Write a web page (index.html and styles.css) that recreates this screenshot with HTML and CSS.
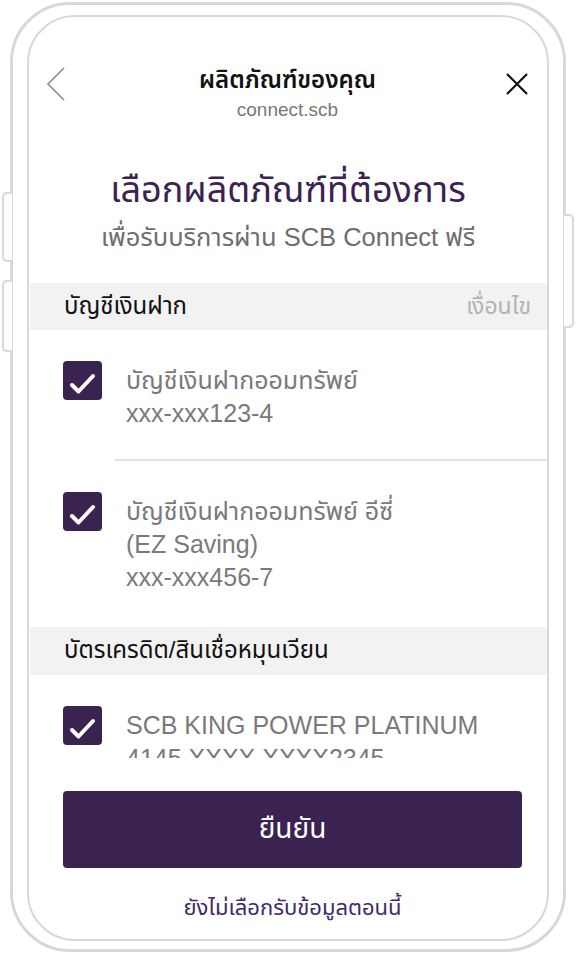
FILE: index.html
```html
<html>
	<head>
		<meta charset="utf-8">
		<link rel="stylesheet" href="styles.css">
	</head>
	<body>
		<div class="device">
			<span class="side-key key-left-top"></span>
			<span class="side-key key-left-bottom"></span>
			<span class="side-key key-right"></span>

			<div class="screen">
				<div class="nav">
					<a class="nav-back" href="#">
						<svg width="20" height="34" viewBox="0 0 20 34"><path d="M18 1 L2 17 L18 33" fill="none" stroke="#8a8a8a" stroke-width="1.6"/></svg>
					</a>
					<div class="nav-title">
						<h1>ผลิตภัณฑ์ของคุณ</h1>
						<p>connect.scb</p>
					</div>
					<a class="nav-close" href="#">
						<svg width="24" height="24" viewBox="0 0 24 24"><path d="M2 2 L22 22 M22 2 L2 22" fill="none" stroke="#111" stroke-width="2.2"/></svg>
					</a>
				</div>

				<div class="intro">
					<h2>เลือกผลิตภัณฑ์ที่ต้องการ</h2>
					<p>เพื่อรับบริการผ่าน SCB Connect ฟรี</p>
				</div>

				<div class="product-list">
					<div class="group-head">
						<span>บัญชีเงินฝาก</span>
						<a href="#">เงื่อนไข</a>
					</div>

					<label class="product">
						<span class="check">
							<svg width="39" height="39" viewBox="0 0 39 39"><path d="M9 24 L15.5 30.5 L30 15" fill="none" stroke="#fff" stroke-width="4" stroke-linecap="round" stroke-linejoin="round"/></svg>
						</span>
						<span class="product-name">
							บัญชีเงินฝากออมทรัพย์<br>
							xxx-xxx123-4
						</span>
					</label>

					<hr class="divider">

					<label class="product">
						<span class="check">
							<svg width="39" height="39" viewBox="0 0 39 39"><path d="M9 24 L15.5 30.5 L30 15" fill="none" stroke="#fff" stroke-width="4" stroke-linecap="round" stroke-linejoin="round"/></svg>
						</span>
						<span class="product-name">
							บัญชีเงินฝากออมทรัพย์ อีซี่<br>
							(EZ Saving)<br>
							xxx-xxx456-7
						</span>
					</label>

					<div class="group-head">
						<span>บัตรเครดิต/สินเชื่อหมุนเวียน</span>
					</div>

					<label class="product">
						<span class="check">
							<svg width="39" height="39" viewBox="0 0 39 39"><path d="M9 24 L15.5 30.5 L30 15" fill="none" stroke="#fff" stroke-width="4" stroke-linecap="round" stroke-linejoin="round"/></svg>
						</span>
						<span class="product-name">
							SCB KING POWER PLATINUM<br>
							4145 XXXX XXXX2345
						</span>
					</label>
				</div>

				<div class="actions">
					<button class="confirm">ยืนยัน</button>
					<a class="skip" href="#">ยังไม่เลือกรับข้อมูลตอนนี้</a>
				</div>
			</div>
		</div>
	</body>
</html>
```

FILE: styles.css
```css
body {
	margin: 0;
	background: #fff;
	font-family: "Liberation Sans", "Noto Sans Thai", "DejaVu Sans", sans-serif;
}

.device {
	position: relative;
	box-sizing: border-box;
	width: 556px;
	height: 950px;
	margin: 2px 0 0 10px;
	padding: 10px 14px 8px 14px;
	border: 3px solid #d6d9d9;
	border-radius: 60px;
}

/* hardware keys sticking out of the case */
.side-key {
	position: absolute;
	width: 8px;
	border: 2px solid #d6d9d9;
	background: #fff;
}

.key-left-top,
.key-left-bottom {
	left: -11px;
	border-right: none;
	border-radius: 5px 0 0 5px;
}

.key-left-top {
	top: 187px;
	height: 66px;
}

.key-left-bottom {
	top: 275px;
	height: 68px;
}

.key-right {
	right: -11px;
	top: 209px;
	height: 110px;
	border-left: none;
	border-radius: 0 5px 5px 0;
}

.screen {
	box-sizing: border-box;
	height: 100%;
	border: 2px solid #d6d9d9;
	border-radius: 48px;
	display: flex;
	flex-direction: column;
	overflow: hidden;
}

/* top bar */
.nav {
	display: flex;
	align-items: flex-start;
	justify-content: space-between;
	padding: 47px 19px 0 17px;
}

.nav-back {
	display: block;
	width: 24px;
	margin-top: 3px;
}

.nav-close {
	display: block;
	width: 24px;
	margin-top: 8px;
	margin-right: -1px;
	text-align: right;
}

.nav-title {
	text-align: center;
}

.nav-title h1 {
	margin: 0;
	font-size: 24px;
	line-height: 32px;
	font-weight: 600;
	color: #111;
}

.nav-title p {
	margin: 3px 0 0;
	font-size: 19px;
	line-height: 22px;
	color: #777;
}

.intro {
	text-align: center;
	margin-top: 44px;
}

.intro h2 {
	margin: 0;
	font-size: 36px;
	line-height: 50px;
	font-weight: normal;
	color: #3a2350;
}

.intro p {
	margin: 5px 0 0;
	font-size: 25.5px;
	line-height: 34px;
	color: #6e6e6e;
}

.product-list {
	margin-top: 29px;
	height: 475px;
	overflow: hidden;
	flex-shrink: 0;
}

.group-head {
	display: flex;
	justify-content: space-between;
	align-items: center;
	height: 47px;
	padding: 0 16px 0 34px;
	margin-left: 1px;
	background: #f2f2f2;
	font-size: 24px;
	color: #111;
}

.product + .group-head {
	margin-top: 4px;
	height: 48px;
}

.group-head a {
	font-size: 23px;
	color: #b3b3b3;
	text-decoration: none;
}

.product {
	display: flex;
	align-items: flex-start;
	padding: 31px 20px 29px 34px;
}

.check {
	flex-shrink: 0;
	width: 39px;
	height: 39px;
	border-radius: 4px;
	background: #3a2350;
}

.check svg {
	display: block;
}

.product-name {
	margin: 3px 0 0 24px;
	font-size: 25px;
	line-height: 33px;
	color: #7a7a7a;
}

.divider {
	margin: 0 0 0 86px;
	border: none;
	border-top: 2px solid #e2e2e2;
}

.actions {
	display: flex;
	flex-direction: column;
	align-items: center;
	padding: 33px 25px 0 34px;
}

.confirm {
	width: 100%;
	height: 77px;
	border: none;
	border-radius: 4px;
	background: #3a2350;
	color: #fff;
	font-family: inherit;
	font-size: 28px;
}

.skip {
	margin-top: 24px;
	font-size: 22px;
	color: #3f2a6e;
	text-decoration: none;
}
```
